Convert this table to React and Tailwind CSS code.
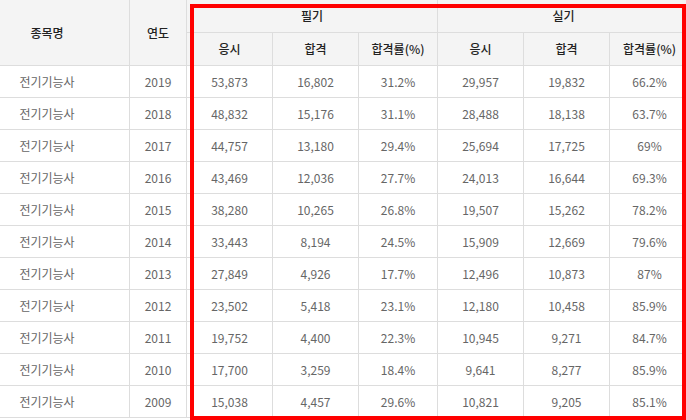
import React from "react";

const rows = [
  ["2019", "53,873", "16,802", "31.2%", "29,957", "19,832", "66.2%"],
  ["2018", "48,832", "15,176", "31.1%", "28,488", "18,138", "63.7%"],
  ["2017", "44,757", "13,180", "29.4%", "25,694", "17,725", "69%"],
  ["2016", "43,469", "12,036", "27.7%", "24,013", "16,644", "69.3%"],
  ["2015", "38,280", "10,265", "26.8%", "19,507", "15,262", "78.2%"],
  ["2014", "33,443", "8,194", "24.5%", "15,909", "12,669", "79.6%"],
  ["2013", "27,849", "4,926", "17.7%", "12,496", "10,873", "87%"],
  ["2012", "23,502", "5,418", "23.1%", "12,180", "10,458", "85.9%"],
  ["2011", "19,752", "4,400", "22.3%", "10,945", "9,271", "84.7%"],
  ["2010", "17,700", "3,259", "18.4%", "9,641", "8,277", "85.9%"],
  ["2009", "15,038", "4,457", "29.6%", "10,821", "9,205", "85.1%"],
];

const head = "flex items-center justify-center border-r border-b border-[#dddddd] bg-[#f4f4f4] font-medium text-[#222]";
const cell = "flex h-[32px] items-center justify-center border-r border-b border-[#dddddd] text-[#666]";

export default function App() {
  return (
    <div className="relative h-[420px] w-[686px] overflow-hidden bg-white text-[12px] font-['Noto_Sans_CJK_KR','Malgun_Gothic',sans-serif]">
      <div className="ml-[-35px] grid w-max grid-cols-[165px_57px_86px_86px_79px_86px_86px_80px] grid-rows-[33px_33px]">
        <div className={`${head} row-span-2`}>종목명</div>
        <div className={`${head} row-span-2`}>연도</div>
        <div className={`${head} col-span-3 h-[33px]`}>필기</div>
        <div className={`${head} col-span-3 h-[33px]`}>실기</div>
        <div className={`${head} h-[33px]`}>응시</div>
        <div className={`${head} h-[33px]`}>합격</div>
        <div className={`${head} h-[33px]`}>합격률(%)</div>
        <div className={`${head} h-[33px]`}>응시</div>
        <div className={`${head} h-[33px]`}>합격</div>
        <div className={`${head} h-[33px]`}>합격률(%)</div>

        {rows.map((r) => (
          <React.Fragment key={r[0]}>
            <div className={cell}>전기기능사</div>
            {r.map((v, i) => (
              <div key={i} className={cell}>
                {v}
              </div>
            ))}
          </React.Fragment>
        ))}
      </div>

      {/* highlight box drawn over the table */}
      <div className="pointer-events-none absolute left-[190px] top-[4px] h-[416px] w-[496px] border-4 border-[#ff0000]" />
    </div>
  );
}
